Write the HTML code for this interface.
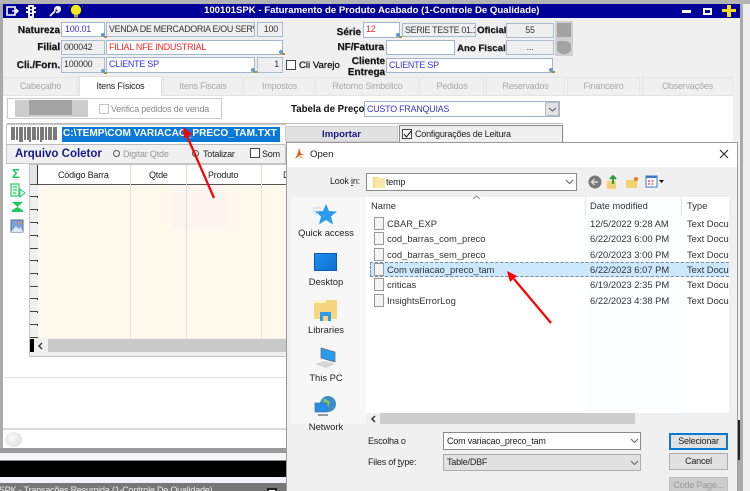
<!DOCTYPE html>
<html><head><meta charset="utf-8">
<style>
html,body{margin:0;padding:0}
body{width:750px;height:491px;overflow:hidden;background:#f0f0f0;position:relative;font-family:"Liberation Sans",sans-serif;font-size:9px;letter-spacing:-.2px;color:#222}
#w{position:absolute;left:0;top:0;width:750px;height:491px;overflow:hidden;filter:blur(.35px)}
#w div,#w span.a,#w svg{position:absolute;box-sizing:border-box}
.t{white-space:nowrap;line-height:12px}
.lb{white-space:nowrap;font-weight:bold;color:#111;line-height:11px;text-align:right;font-size:10px;letter-spacing:0;text-shadow:.5px .5px 0 #777}
.f{border:1px solid #9fb6cd;background:#fff;line-height:13px;padding-left:3px;white-space:nowrap;overflow:hidden;color:#333;font-size:8.9px}
.g{background:#efefef;border:1px solid #a9bccd}
.tab{background:#f0f0f0;border:1px solid #e6e6e6;border-bottom:0;color:#aaa;text-align:center;line-height:17px}
.rw{left:30px;width:8px;height:12px;background:#f0f0f0;border-bottom:1px solid #444}
.col{width:1px;background:#e4e0d4}
.nm{font-size:9.4px;letter-spacing:0;color:#333;white-space:nowrap;line-height:12px}
.sd{font-size:9.4px;letter-spacing:0;color:#222;width:70px;text-align:center;left:291px;line-height:12px}
.btn{left:669px;width:59px;height:17px;background:#e1e1e1;border:1px solid #adadad;text-align:center;line-height:15px;color:#222}
</style></head><body>
<div id="w">
<!-- outer -->
<div style="left:0;top:0;width:743px;height:491px;background:#aaa"></div>
<div style="left:743px;top:0;width:7px;height:491px;background:#f0f0f0"></div>
<div style="left:0;top:0;width:750px;height:4px;background:#b4b4b4"></div>
<div style="left:3px;top:4px;width:737px;height:14px;background:#000099"></div>
<div style="left:3px;top:18px;width:737px;height:430px;background:#f0f0f0"></div>
<div class="t" style="left:204px;top:5px;color:#fff;font-weight:bold;font-size:9.6px;letter-spacing:0">100101SPK - Faturamento de Produto Acabado (1-Controle De Qualidade)</div>
<!-- toolbar icons -->
<svg style="left:5px;top:5px" width="80" height="13" viewBox="0 0 80 13">
<path d="M2 2h8v8H2z" fill="none" stroke="#fff" stroke-width="1.6"/><path d="M7 6h6M11 4l2 2-2 2" stroke="#fff" fill="none" stroke-width="1.3"/>
<rect x="23" y="0" width="6" height="13" rx="1" fill="#fff"/><rect x="21" y="2" width="10" height="2" fill="#fff"/><rect x="21" y="6" width="10" height="2" fill="#fff"/><circle cx="26" cy="3" r="1.2" fill="#000099"/><circle cx="26" cy="6.5" r="1.2" fill="#000099"/><circle cx="26" cy="10" r="1.2" fill="#000099"/>
<path d="M45 11l5-5M50 6c-1-3 2-5 4-4l-2 2 1 1 2-2c1 3-2 5-4 4" stroke="#fff" stroke-width="1.6" fill="none"/>
<circle cx="71" cy="5" r="5.2" fill="#f4ee10"/><rect x="69" y="9.500" width="4" height="3" fill="#a8a050"/><path d="M64 1l1 1M78 1l-1 1" stroke="#556" stroke-width="1"/>
</svg>
<!-- window buttons -->
<div style="left:682px;top:10px;width:9px;height:3px;background:#fff"></div>
<div style="left:703px;top:8px;width:9px;height:7px;border:2px solid #fff;background:#000099"></div>
<div style="left:722px;top:9px;width:14px;height:3px;background:#ffd820"></div>
<div style="left:727px;top:5px;width:4px;height:12px;background:#ffd820"></div>
<!-- row 1 -->
<div class="lb" style="left:0;width:60px;top:25px">Natureza</div>
<div class="f" style="left:61px;top:22px;width:44px;height:15px;color:#3333dd">100.01</div>
<div class="f g" style="left:106px;top:22px;width:149px;height:15px;padding-left:2px;letter-spacing:-.3px">VENDA DE MERCADORIA E/OU SERVI</div>
<div class="f g" style="left:257px;top:22px;width:26px;height:15px;text-align:right;padding-right:4px">100</div>
<div class="lb" style="left:0;width:60px;top:42px">Filial</div>
<div class="f g" style="left:61px;top:40px;width:44px;height:15px;padding-left:2px">000042</div>
<div class="f" style="left:106px;top:40px;width:177px;height:15px;color:#f22;padding-left:2px">FILIAL NFE INDUSTRIAL</div>
<div class="lb" style="left:0;width:60px;top:60px">Cli./Forn.</div>
<div class="f g" style="left:61px;top:57px;width:44px;height:16px;padding-left:2px">100000</div>
<div class="f" style="left:106px;top:57px;width:149px;height:16px;color:#3333dd;padding-left:2px">CLIENTE SP</div>
<div class="f g" style="left:257px;top:57px;width:26px;height:16px;text-align:right;padding-right:3px">1</div>
<div style="left:286px;top:60px;width:10px;height:10px;background:#fff;border:1px solid #444"></div>
<div class="lb" style="left:299px;top:60px;text-shadow:none;font-weight:normal;font-size:9.6px;-webkit-text-stroke:.25px #111">Cli Varejo</div>
<div class="lb" style="left:300px;width:61px;top:27px">Série</div>
<div class="f" style="left:363px;top:22px;width:37px;height:16px;color:#f22;padding-left:2px">12</div>
<div class="f g" style="left:402px;top:23px;width:74px;height:14px;padding-left:2px;line-height:12px;letter-spacing:-.3px">SERIE TESTE 01.1</div>
<div class="lb" style="left:477px;top:25px;font-size:9.6px">Oficial</div>
<div class="f g" style="left:506px;top:23px;width:48px;height:15px;text-align:center;padding:0">55</div>
<div style="left:555px;top:21px;width:18px;height:18px;background:#a3a3a3;border:2px solid #cfcfcf"></div>
<div class="lb" style="left:300px;width:84px;top:42px">NF/Fatura</div>
<div class="f" style="left:386px;top:40px;width:69px;height:15px"></div>
<div class="lb" style="left:457px;top:43px;font-size:9.6px">Ano Fiscal</div>
<div class="f g" style="left:506px;top:40px;width:48px;height:15px;text-align:center;padding:0">...</div>
<div style="left:555px;top:39px;width:18px;height:17px;background:#cfcfcf"></div>
<div style="left:557px;top:41px;width:14px;height:13px;background:#a3a3a3;border-radius:2px 5px 6px 6px"></div>
<div class="lb" style="left:320px;width:65px;top:56px">Cliente</div>
<div class="lb" style="left:320px;width:65px;top:67px">Entrega</div>
<div class="f" style="left:386px;top:58px;width:167px;height:15px;color:#3333dd;padding-left:2px">CLIENTE SP</div>
<!-- magnifiers -->
<svg style="left:0;top:0" width="750" height="80" viewBox="0 0 750 80">
<g><circle cx="103" cy="35" r="2" fill="#5b9bd5"/><rect x="104" y="36" width="3" height="2" fill="#b58a3a"/>
<circle cx="281" cy="52" r="2" fill="#5b9bd5"/><rect x="282" y="53" width="3" height="2" fill="#b58a3a"/>
<circle cx="103" cy="71" r="2" fill="#5b9bd5"/><rect x="104" y="72" width="3" height="2" fill="#b58a3a"/>
<circle cx="253" cy="70" r="2" fill="#5b9bd5"/><rect x="254" y="71" width="3" height="2" fill="#b58a3a"/>
<circle cx="398" cy="35" r="2" fill="#5b9bd5"/><rect x="399" y="36" width="3" height="2" fill="#b58a3a"/>
<circle cx="551" cy="70" r="2" fill="#5b9bd5"/><rect x="552" y="71" width="3" height="2" fill="#b58a3a"/></g>
</svg>
<!-- tabs -->
<div class="tab" style="left:3px;top:77px;width:75px;height:18px">Cabeçalho</div>
<div class="tab" style="left:163px;top:77px;width:80px;height:18px">Itens Fiscais</div>
<div class="tab" style="left:244px;top:77px;width:71px;height:18px">Impostos</div>
<div class="tab" style="left:316px;top:77px;width:103px;height:18px">Retorno Simbólico</div>
<div class="tab" style="left:420px;top:77px;width:64px;height:18px">Pedidos</div>
<div class="tab" style="left:486px;top:77px;width:79px;height:18px">Reservados</div>
<div class="tab" style="left:567px;top:77px;width:73px;height:18px">Financeiro</div>
<div class="tab" style="left:642px;top:77px;width:91px;height:18px">Observações</div>
<div style="left:3px;top:95px;width:730px;height:353px;background:#fff;border-top:1px solid #e4e4e4"></div>
<div class="tab" style="left:79px;top:76px;width:83px;height:20px;background:#fff;color:#222;line-height:19px;border-color:#e0e0e0">Itens Físicos</div>
<!-- verifica -->
<div style="left:7px;top:98px;width:215px;height:21px;background:#fff;border:1px solid #c8c8c8"></div>
<div style="left:15px;top:100px;width:73px;height:17px;background:#cdcdcd"></div>
<div style="left:29px;top:100px;width:43px;height:15px;background:#a4a4a4"></div>
<div style="left:99px;top:104px;width:10px;height:10px;background:#fff;border:1px solid #c4c4c4"></div>
<div class="t" style="left:111px;top:103px;color:#8a8a8a">Verifica pedidos de venda</div>
<div class="lb" style="left:291px;top:104px;text-shadow:none;font-size:9.7px">Tabela de Preço</div>
<div class="f" style="left:364px;top:101px;width:196px;height:16px;color:#3333dd;padding-left:2px;line-height:14px">CUSTO FRANQUIAS</div>
<div style="left:545px;top:102px;width:14px;height:14px;background:#e3e3e3;border:1px solid #bbb"></div>
<svg style="left:548px;top:107px" width="9" height="5"><path d="M1 1l3.5 3L8 1" fill="none" stroke="#555"/></svg>
<!-- barcode panel -->
<div style="left:7px;top:123px;width:556px;height:1px;background:#bbb"></div>
<div style="left:6px;top:124px;width:280px;height:40px;background:#f0f0f0;border:1px solid #c6c6c6"></div>
<div style="left:7px;top:125px;width:278px;height:20px;background:#fff;border-bottom:1px solid #bbb"></div>
<svg style="left:11px;top:127px" width="47" height="15" viewBox="0 0 47 15">
<path d="M1 0v13M3 0v13M6 0v13M9 0v15M11 0v15M14 0v13M17 0v13M19 0v15M22 0v13M24 0v13M27 0v13M30 0v15M32 0v13M35 0v13M38 0v13M40 0v13M43 0v13M45 0v13" stroke="#333" stroke-width="1.3"/>
</svg>
<div style="left:62px;top:127px;width:218px;height:15px;background:#0a78d7"></div>
<div class="t" style="left:63px;top:128px;color:#fff;font-weight:bold;font-size:10.1px;letter-spacing:0">C:\TEMP\COM VARIACAO_PRECO_TAM.TXT</div>
<div class="t" style="left:15px;top:147px;color:#1a1a8a;font-weight:bold;font-size:11.5px;letter-spacing:0;line-height:14px">Arquivo Coletor</div>
<div style="left:113px;top:150px;width:7px;height:7px;border:1.5px solid #555;border-radius:50%;background:#f0f0f0"></div>
<div class="t" style="left:123px;top:148px;color:#999">Digitar Qtde</div>
<div style="left:192px;top:150px;width:7px;height:7px;border:1.5px solid #555;border-radius:50%;background:#f0f0f0"></div>
<div class="t" style="left:203px;top:148px;color:#222">Totalizar</div>
<div style="left:250px;top:148px;width:10px;height:10px;background:#fff;border:1px solid #444"></div>
<div class="t" style="left:262px;top:148px;color:#222">Som</div>
<!-- importar -->
<div style="left:285px;top:125px;width:279px;height:20px;background:#f5f5f5"></div>
<div style="left:285px;top:126px;width:113px;height:16px;background:#e1e1e1;border:1px solid #cfcfcf;text-align:center;color:#1a1a8a;font-weight:bold;line-height:15px;font-size:9.6px;letter-spacing:0">Importar</div>
<div style="left:399px;top:125px;width:164px;height:18px;background:#efefef;border:1px solid #888"></div>
<div style="left:402px;top:129px;width:10px;height:10px;background:#fff;border:1px solid #444"></div>
<svg style="left:403px;top:130px" width="9" height="9"><path d="M1 4l2.5 3L8 1" fill="none" stroke="#222" stroke-width="1.1"/></svg>
<div class="t" style="left:415px;top:128px;color:#222">Configurações de Leitura</div>
<!-- left icons -->
<div class="t" style="left:12px;top:166px;color:#1fc95c;font-weight:bold;font-size:13px;line-height:15px;letter-spacing:0">Σ</div>
<svg style="left:9px;top:183px" width="18" height="56" viewBox="0 0 18 56">
<path d="M2 1h8v12H2zM4 4h4M4 7h4M4 10h3" fill="#e9fbee" stroke="#2ecb70" stroke-width="1.2"/><path d="M11 6l5 4-5 4z" fill="#fff" stroke="#2ecb70"/>
<path d="M3 19h11l-5.500 5zM3 29h11v-2H3zM8.500 24l5 3H3z" fill="#1fc95c"/>
<rect x="2" y="37" width="12" height="12" fill="#7aa2d8" stroke="#4a6fa8"/><path d="M2 49l5-6 3 3 2-2 2 5z" fill="#dbe6f3"/><circle cx="11" cy="40" r="1.6" fill="#f08a3a"/>
</svg>
<!-- grid -->
<div style="left:29px;top:164px;width:258px;height:193px;background:#f0f0f0;border:1px solid #c4c4c4"></div>
<div style="left:30px;top:165px;width:257px;height:20px;background:#fff"></div>
<div style="left:30px;top:165px;width:7px;height:19px;background:#e6e6e6"></div>
<div style="left:30px;top:184px;width:257px;height:1px;background:#555"></div>
<div style="left:37px;top:165px;width:1px;height:173px;background:#333"></div>
<div style="left:38px;top:185px;width:249px;height:153px;background:#fef9ec"></div>
<div style="left:173px;top:185px;width:54px;height:45px;background:#fdf5ef"></div>
<div class="col" style="left:130px;top:165px;height:173px"></div>
<div class="col" style="left:186px;top:165px;height:173px"></div>
<div class="col" style="left:261px;top:165px;height:173px"></div>
<div class="t" style="left:58px;top:169px;color:#222">Código Barra</div>
<div class="t" style="left:149px;top:169px;color:#222">Qtde</div>
<div class="t" style="left:208px;top:169px;color:#222">Produto</div>
<div class="t" style="left:283px;top:169px;color:#222">D</div>
<div class="rw" style="top:185px"></div><div class="rw" style="top:198px"></div><div class="rw" style="top:211px"></div><div class="rw" style="top:224px"></div><div class="rw" style="top:237px"></div><div class="rw" style="top:249px"></div><div class="rw" style="top:262px"></div><div class="rw" style="top:275px"></div><div class="rw" style="top:287px"></div><div class="rw" style="top:300px"></div><div class="rw" style="top:313px"></div><div class="rw" style="top:326px"></div>
<div style="left:30px;top:339px;width:257px;height:13px;background:#c9c9c9"></div>
<div style="left:30px;top:339px;width:4px;height:13px;background:#000"></div>
<div style="left:34px;top:339px;width:14px;height:13px;background:#f0f0f0"></div>
<svg style="left:37px;top:342px" width="8" height="8"><path d="M5 1L2 4l3 3" fill="none" stroke="#333" stroke-width="1.4"/></svg>
<!-- bottom -->
<div style="left:4px;top:377px;width:283px;height:1px;background:#e2e2e2"></div>
<div style="left:3px;top:428px;width:284px;height:2px;background:#d8d8d8"></div>
<div style="left:5px;top:432px;width:17px;height:15px;border-radius:50%;background:radial-gradient(circle at 40% 40%,#fafafa,#d8d8d8)"></div>
<div style="left:0;top:448px;width:287px;height:5px;background:#9a9a9a"></div>
<div style="left:0;top:453px;width:287px;height:7px;background:#f6f6fa"></div>
<div style="left:0;top:460px;width:287px;height:1px;background:#888"></div>
<div style="left:0;top:461px;width:287px;height:16px;background:#000"></div>
<div style="left:0;top:477px;width:287px;height:6px;background:#f2f2fa"></div>
<div style="left:0;top:483px;width:287px;height:8px;background:#777"></div>
<div class="t" style="left:-1px;top:484px;color:#eee">SPK - Transações Resumida (1-Controle De Qualidade)</div>
<div style="left:267px;top:488px;width:10px;height:6px;background:#fff;border:2px solid #222"></div>
<!-- right dark strip -->
<div style="left:738px;top:420px;width:2px;height:40px;background:#222"></div>
<!-- dialog -->
<div style="left:286px;top:142px;width:452px;height:349px;background:#f0f0f0;border:1px solid #9a9a9a;border-bottom:0"></div>
<div style="left:287px;top:143px;width:450px;height:24px;background:#fff"></div>
<svg style="left:293px;top:148px" width="12" height="12" viewBox="0 0 12 12"><path d="M6 0l2 6 4 1-5 0-5 4 3-6z" fill="#e8501c"/><path d="M7 7l4 4-5-2z" fill="#f4b63a"/></svg>
<div class="t" style="left:310px;top:149px;color:#222;font-size:9.6px;letter-spacing:0">Open</div>
<svg style="left:719px;top:149px" width="10" height="10"><path d="M1 1l8 8M9 1l-8 8" stroke="#222" stroke-width="1"/></svg>
<div class="t" style="left:330px;top:175px;color:#222">Look <u>i</u>n:</div>
<div style="left:366px;top:173px;width:211px;height:18px;background:#fff;border:1px solid #8a8a8a"></div>
<svg style="left:372px;top:175px" width="14" height="14" viewBox="0 0 14 14"><path d="M1 2h4l1 0v11H1z" fill="#f4d98a"/><path d="M3 3h10v10H3z" fill="#fbe7a6"/></svg>
<div class="t" style="left:386px;top:176px;color:#222">temp</div>
<svg style="left:565px;top:179px" width="9" height="6"><path d="M1 1l3.500 3.500L8 1" fill="none" stroke="#666"/></svg>
<svg style="left:588px;top:174px" width="80" height="16" viewBox="0 0 80 16">
<circle cx="7" cy="8" r="6.500" fill="#7a7a7a"/><path d="M10 8H4M6.500 5L3.500 8l3 3" stroke="#ddd" fill="none" stroke-width="1.400"/>
<path d="M19 7h9v8h-9z" fill="#f2d26e"/><path d="M25 10V3M22 5l3-3 3 3" stroke="#2e9e3a" fill="none" stroke-width="2"/>
<path d="M38 6h11v8H38z" fill="#f2d26e"/><circle cx="48" cy="5" r="2" fill="#ee7a2a"/>
<rect x="58" y="2" width="11" height="11" fill="#fff" stroke="#3a78c4"/><path d="M58 3h11" stroke="#3a78c4" stroke-width="2"/><path d="M60 7h2M63.500 7h2M60 10h2M63.500 10h2" stroke="#d55" stroke-width="1.500"/><path d="M71 6h5l-2.500 3z" fill="#111"/>
</svg>
<!-- sidebar -->
<div style="left:291px;top:197px;width:75px;height:227px;background:#f7f7f7"></div>
<svg style="left:311px;top:201px" width="30" height="26" viewBox="0 0 30 26"><path d="M15 3l3 7 8 .5-6 5 2 8-7-4.500-7 4.500 2-8-6-5 8-.5z" fill="#2a9cf0"/><path d="M2 7h8M1 10h7M3 13h5" stroke="#bfe0f8" stroke-width="1"/></svg>
<div class="sd" style="top:227px">Quick access</div>
<div style="left:314px;top:253px;width:23px;height:18px;background:linear-gradient(135deg,#1e90f0,#0e6fd0);border:1px solid #0a5aa8"></div>
<div class="sd" style="top:276px">Desktop</div>
<div style="left:314px;top:300px;width:23px;height:19px;background:#f6d77e"></div>
<div style="left:314px;top:300px;width:12px;height:3px;background:#fff3c8"></div>
<div style="left:320px;top:312px;width:11px;height:9px;background:#2a9cf0"></div>
<div style="left:323px;top:316px;width:5px;height:5px;background:#f6d77e"></div>
<div class="sd" style="top:324px">Libraries</div>
<svg style="left:313px;top:347px" width="26" height="24" viewBox="0 0 26 24"><path d="M8 1l14 4v10L8 11z" fill="#2a9cf0" stroke="#667" stroke-width=".7"/><path d="M2 17l10-3 10 3-9 4z" fill="#d4d4d4"/></svg>
<div class="sd" style="top:372px">This PC</div>
<svg style="left:314px;top:395px" width="24" height="24" viewBox="0 0 24 24"><circle cx="14" cy="9" r="8" fill="#3b8ec9"/><path d="M10 3l6 4-2 5-5-3z" fill="#86c46a"/><rect x="1" y="8" width="12" height="9" fill="#1e90f0" stroke="#667" stroke-width=".7"/><path d="M4 20h10" stroke="#999" stroke-width="2"/></svg>
<div class="sd" style="top:421px">Network</div>
<!-- list -->
<div style="left:366px;top:197px;width:363px;height:216px;background:#fff"></div>
<div style="left:586px;top:197px;width:95px;height:216px;background:#fcfdfe"></div>
<div style="left:585px;top:197px;width:1px;height:19px;background:#e4e4e4"></div>
<div style="left:681px;top:197px;width:1px;height:19px;background:#e4e4e4"></div>
<svg style="left:472px;top:195px" width="9" height="5"><path d="M1 4l3.500-3L8 4" fill="none" stroke="#888"/></svg>
<div class="nm" style="left:371px;top:200px">Name</div>
<div class="nm" style="left:590px;top:200px">Date modified</div>
<div class="nm" style="left:687px;top:200px">Type</div>
<div style="left:370px;top:262px;width:359px;height:15px;background:#cce8ff;border:1px dashed #7d8a99;border-right:0"></div>
<div class="nm" style="left:387px;top:218px">CBAR_EXP</div>
<div class="nm" style="left:387px;top:233px">cod_barras_com_preco</div>
<div class="nm" style="left:387px;top:249px">cod_barras_sem_preco</div>
<div class="nm" style="left:387px;top:264px">Com variacao_preco_tam</div>
<div class="nm" style="left:387px;top:279px">criticas</div>
<div class="nm" style="left:387px;top:295px">InsightsErrorLog</div>
<div class="nm" style="left:590px;top:218px">12/5/2022 9:28 AM</div>
<div class="nm" style="left:590px;top:233px">6/22/2023 6:00 PM</div>
<div class="nm" style="left:590px;top:249px">6/20/2023 3:00 PM</div>
<div class="nm" style="left:590px;top:264px">6/22/2023 6:07 PM</div>
<div class="nm" style="left:590px;top:279px">6/19/2023 2:35 PM</div>
<div class="nm" style="left:590px;top:295px">6/22/2023 4:38 PM</div>
<div class="nm" style="left:687px;top:218px;width:42px;overflow:hidden">Text Document</div>
<div class="nm" style="left:687px;top:233px;width:42px;overflow:hidden">Text Document</div>
<div class="nm" style="left:687px;top:249px;width:42px;overflow:hidden">Text Document</div>
<div class="nm" style="left:687px;top:264px;width:42px;overflow:hidden">Text Document</div>
<div class="nm" style="left:687px;top:279px;width:42px;overflow:hidden">Text Document</div>
<div class="nm" style="left:687px;top:295px;width:42px;overflow:hidden">Text Document</div>
<svg style="left:374px;top:217px" width="11" height="92" viewBox="0 0 11 92">
<g fill="#f4f4f4" stroke="#9a9a9a"><rect x=".5" y=".5" width="9" height="12"/><rect x=".5" y="15.500" width="9" height="12"/><rect x=".5" y="31.500" width="9" height="12"/><rect x=".5" y="46.500" width="9" height="12"/><rect x=".5" y="61.500" width="9" height="12"/><rect x=".5" y="77.500" width="9" height="12"/></g>
</svg>
<!-- h scroll -->
<div style="left:366px;top:413px;width:363px;height:11px;background:#f0f0f0"></div>
<div style="left:380px;top:413px;width:255px;height:11px;background:#cdcdcd"></div>
<svg style="left:370px;top:415px" width="7" height="8"><path d="M5 1L2 4l3 3" fill="none" stroke="#333" stroke-width="1.500"/></svg>
<!-- form -->
<div class="t" style="left:368px;top:435px;color:#222">Escolha o</div>
<div style="left:443px;top:432px;width:198px;height:18px;background:#fff;border:1px solid #8a8a8a;padding-left:3px;line-height:16px;color:#222">Com variacao_preco_tam</div>
<svg style="left:630px;top:438px" width="9" height="6"><path d="M1 1l3.500 3.500L8 1" fill="none" stroke="#666"/></svg>
<div class="t" style="left:368px;top:456px;color:#222">Files of <u>t</u>ype:</div>
<div style="left:443px;top:454px;width:198px;height:17px;background:#e1e1e1;border:1px solid #adadad;padding-left:3px;line-height:15px;color:#222">Table/DBF</div>
<svg style="left:630px;top:460px" width="9" height="6"><path d="M1 1l3.500 3.500L8 1" fill="none" stroke="#666"/></svg>
<div class="btn" style="top:433px;border:2px solid #0a78d7;line-height:13px">Selecionar</div>
<div class="btn" style="top:453px">Cancel</div>
<div class="btn" style="top:477px;color:#999;background:#ccc;border-color:#bfbfbf;height:20px">Code Page...</div>
<!-- arrows -->
<svg style="left:0;top:0" width="750" height="491" viewBox="0 0 750 491">
<path d="M214 198L187 136" stroke="#f00" stroke-width="2.200" fill="none"/><path d="M183 127l9 7-8 4z" fill="#f00"/>
<path d="M551 323L514 279" stroke="#f00" stroke-width="2.200" fill="none"/><path d="M507 271l10 5-7 6z" fill="#f00"/>
</svg>
</div>
</body></html>
